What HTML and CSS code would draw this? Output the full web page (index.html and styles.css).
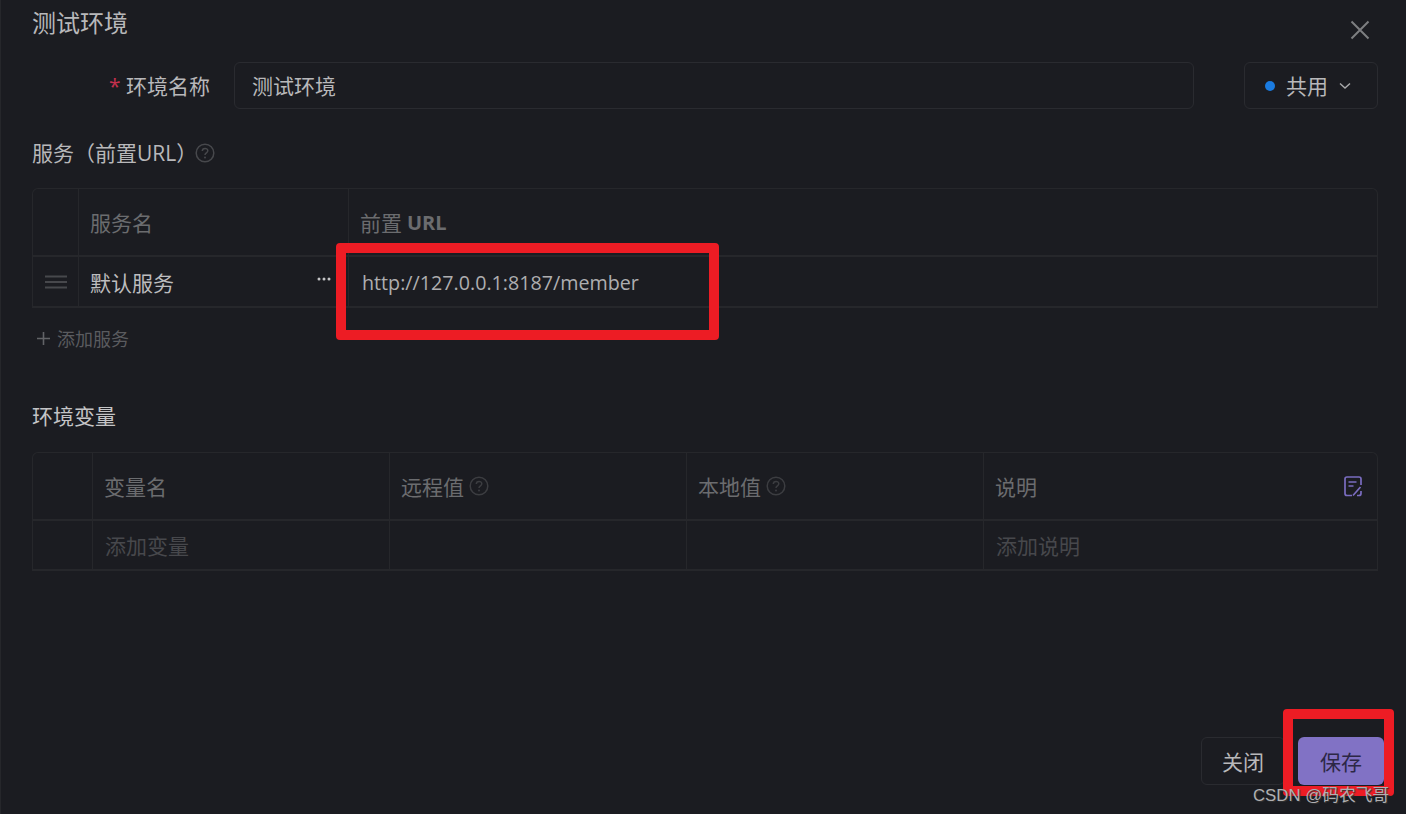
FILE: index.html
```html
<!DOCTYPE html>
<html>
    <head>
        <title>测试环境</title>
        <link rel="stylesheet" href="styles.css">
    </head>
    <body>
        <div class="dialog">
            <div class="head">
                <h1 class="title">测试环境</h1>
                <svg class="close" width="20" height="20" viewBox="0 0 20 20"><path d="M1.5 1.5 L18.5 18.5 M18.5 1.5 L1.5 18.5" stroke="#7d7e81" stroke-width="2" fill="none"/></svg>
            </div>
            <div class="name-row">
                <label class="name-label"><span class="star">*</span> 环境名称</label>
                <div class="name-input">测试环境</div>
                <div class="share">
                    <span class="dot"></span>
                    <span>共用</span>
                    <svg width="12" height="8" viewBox="0 0 12 8"><path d="M1 1.5 L6 6 L11 1.5" stroke="#a9a9ab" stroke-width="1.4" fill="none"/></svg>
                </div>
            </div>
            <div class="section service-title">
                服务（前置URL）
                <svg class="help" width="20" height="20" viewBox="0 0 20 20"><circle cx="10" cy="10" r="8.8" stroke="#47484c" stroke-width="1.5" fill="none"/><path d="M7.3 8 C7.3 4.6 12.8 4.6 12.8 7.8 C12.8 9.8 10 9.8 10 12" stroke="#47484c" stroke-width="1.5" fill="none"/><circle cx="10" cy="14.6" r="1" fill="#47484c"/></svg>
            </div>
            <div class="grid service-grid">
                <div class="cell head-cell"></div>
                <div class="cell head-cell pad">服务名</div>
                <div class="cell head-cell pad last url-head">前置 <b>URL</b></div>
                <div class="cell body-cell drag">
                    <svg width="22" height="14" viewBox="0 0 22 14"><path d="M0 1.5 H22 M0 7 H22 M0 12.5 H22" stroke="#47484c" stroke-width="2" fill="none"/></svg>
                </div>
                <div class="cell body-cell pad service-name">
                    默认服务
                    <svg class="more" width="14" height="4" viewBox="0 0 14 4"><circle cx="2" cy="2" r="1.5" fill="#c4c4c6"/><circle cx="7" cy="2" r="1.5" fill="#c4c4c6"/><circle cx="12" cy="2" r="1.5" fill="#c4c4c6"/></svg>
                </div>
                <div class="cell body-cell pad last url-cell">http://127.0.0.1:8187/member</div>
            </div>
            <div class="add-service">
                <svg width="13" height="13" viewBox="0 0 13 13"><path d="M6.5 0 V13 M0 6.5 H13" stroke="#626367" stroke-width="1.6" fill="none"/></svg>
                添加服务
            </div>
            <div class="section var-title">环境变量</div>
            <div class="grid var-grid">
                <div class="cell head-cell"></div>
                <div class="cell head-cell pad">变量名</div>
                <div class="cell head-cell pad">远程值
                    <svg class="help" width="20" height="20" viewBox="0 0 20 20"><circle cx="10" cy="10" r="8.8" stroke="#3c3d41" stroke-width="1.5" fill="none"/><path d="M7.3 8 C7.3 4.6 12.8 4.6 12.8 7.8 C12.8 9.8 10 9.8 10 12" stroke="#3c3d41" stroke-width="1.5" fill="none"/><circle cx="10" cy="14.6" r="1" fill="#3c3d41"/></svg>
                </div>
                <div class="cell head-cell pad">本地值
                    <svg class="help" width="20" height="20" viewBox="0 0 20 20"><circle cx="10" cy="10" r="8.8" stroke="#3c3d41" stroke-width="1.5" fill="none"/><path d="M7.3 8 C7.3 4.6 12.8 4.6 12.8 7.8 C12.8 9.8 10 9.8 10 12" stroke="#3c3d41" stroke-width="1.5" fill="none"/><circle cx="10" cy="14.6" r="1" fill="#3c3d41"/></svg>
                </div>
                <div class="cell head-cell pad last note-head">
                    说明
                    <svg width="18" height="21" viewBox="0 0 18 21"><path d="M8 19.5 H3 Q1 19.5 1 17.5 V3 Q1 1 3 1 H15 Q17 1 17 3 V9 M13 19.5 H15 Q17 19.5 17 17.5 V15" stroke="#7a6cc0" stroke-width="1.7" fill="none"/><path d="M4.5 6 H12.5 M4.5 10 H9.5 M9 19.5 L16.5 11" stroke="#7a6cc0" stroke-width="1.7" fill="none"/></svg>
                </div>
                <div class="cell body-cell"></div>
                <div class="cell body-cell pad ghost">添加变量</div>
                <div class="cell body-cell"></div>
                <div class="cell body-cell"></div>
                <div class="cell body-cell pad last ghost">添加说明</div>
            </div>
            <div class="foot">
                <button class="btn close-btn">关闭</button>
                <button class="btn save-btn">保存</button>
            </div>
        </div>
        <div class="mark mark-url"></div>
        <div class="mark mark-save"></div>
        <div class="watermark">CSDN @码农飞哥</div>
    </body>
</html>
```

FILE: styles.css
```css
body{
    margin: 0;
    background-color: #1b1c21;
    font-family: "Open Sans", "Noto Sans CJK SC", sans-serif;
    color: #b8b8ba;
    overflow: hidden;
}
.dialog{
    height: 814px;
    box-sizing: border-box;
    border-left: 1px solid #26272b;
    padding: 0 28px 29px 31px;
    display: flex;
    flex-direction: column;
}
.head{
    height: 62px;
    display: flex;
    justify-content: space-between;
}
.title{
    margin: 7px 0 0 0;
    font-size: 24px;
    line-height: 32px;
    font-weight: 400;
}
.close{
    margin-top: 20px;
    margin-right: 8px;
}
.name-row{
    height: 47px;
    display: flex;
    align-items: center;
}
.name-label{
    width: 178px;
    padding-bottom: 2px;
    text-align: right;
    font-size: 21px;
    white-space: nowrap;
}
.star{
    color: #c4304d;
}
.name-input{
    width: 941px;
    height: 45px;
    margin-left: 24px;
    padding-left: 17px;
    border: 1px solid #2a2b30;
    border-radius: 6px;
    font-size: 21px;
    line-height: 47px;
}
.share{
    height: 45px;
    width: 126px;
    margin-left: 50px;
    padding-right: 6px;
    border: 1px solid #2a2b30;
    border-radius: 6px;
    font-size: 21px;
    display: flex;
    align-items: center;
    justify-content: center;
    gap: 11px;
}
.share span:nth-child(2){
    margin-top: -2px;
}
.dot{
    width: 10px;
    height: 10px;
    border-radius: 50%;
    background-color: #1a7be0;
}
.section{
    font-size: 21px;
    line-height: 30px;
    display: flex;
    align-items: center;
}
.service-title{
    margin-top: 29px;
}
.service-title .help{
    margin-left: -2px;
}
.grid{
    display: grid;
    border: 1px solid #26272b;
    border-radius: 6px 6px 0 0;
    border-bottom-width: 2px;
}
.service-grid{
    margin-top: 20px;
    grid-template-columns: 46px 270px 1fr;
    grid-template-rows: 68px 49px;
}
.var-grid{
    margin-top: 21px;
    grid-template-columns: 60px 297px 297px 297px 1fr;
    grid-template-rows: 68px 48px;
}
.cell{
    border-right: 1px solid #26272b;
    display: flex;
    align-items: center;
    font-size: 21px;
}
.head-cell{
    border-bottom: 2px solid #26272b;
    color: #6b6c6f;
}
.pad{
    padding-left: 11px;
    gap: 5px;
}
.last{
    border-right: none;
}
.url-head b{
    font-size: 20px;
}
.drag{
    justify-content: center;
}
.service-name{
    justify-content: space-between;
    padding-right: 17px;
    color: #bdbdbf;
}
.more{
    margin-top: -6px;
}
.url-cell{
    padding-left: 13px;
    padding-top: 2px;
    font-size: 19.7px;
    color: #aeaeb0;
}
.add-service{
    margin-top: 18px;
    margin-left: 5px;
    height: 24px;
    display: flex;
    align-items: center;
    gap: 7px;
    font-size: 18px;
    color: #5a5b5f;
}
.var-title{
    margin-top: 51px;
    color: #c4c4c6;
}
.ghost{
    padding-left: 12px;
    color: #47484c;
}
.note-head{
    justify-content: space-between;
    padding-right: 15px;
}
.foot{
    margin-top: auto;
    margin-right: -6px;
    display: flex;
    justify-content: flex-end;
    gap: 13px;
}
.btn{
    height: 48px;
    border-radius: 6px;
    font-family: inherit;
    font-size: 21px;
    padding: 0;
}
.close-btn{
    width: 84px;
    background: none;
    border: 1px solid #2a2b30;
    color: #b8b8ba;
}
.save-btn{
    width: 86px;
    border: none;
    background-color: #8172c5;
    color: #2c2745;
    position: relative;
    z-index: 1;
}
.mark{
    position: absolute;
    box-sizing: border-box;
    border: 10px solid #ed1c24;
    border-radius: 4px;
}
.mark-url{
    left: 336px;
    top: 243px;
    width: 383px;
    height: 97px;
}
.mark-save{
    left: 1283px;
    top: 709px;
    width: 111px;
    height: 87px;
}
.watermark{
    position: absolute;
    left: 1253px;
    top: 784px;
    z-index: 2;
    font-family: "Liberation Sans", "Noto Sans CJK SC", sans-serif;
    font-size: 16.8px;
    line-height: 24px;
    color: #b0b0b2;
    text-shadow: 1px 1px 1px #333;
}
```
